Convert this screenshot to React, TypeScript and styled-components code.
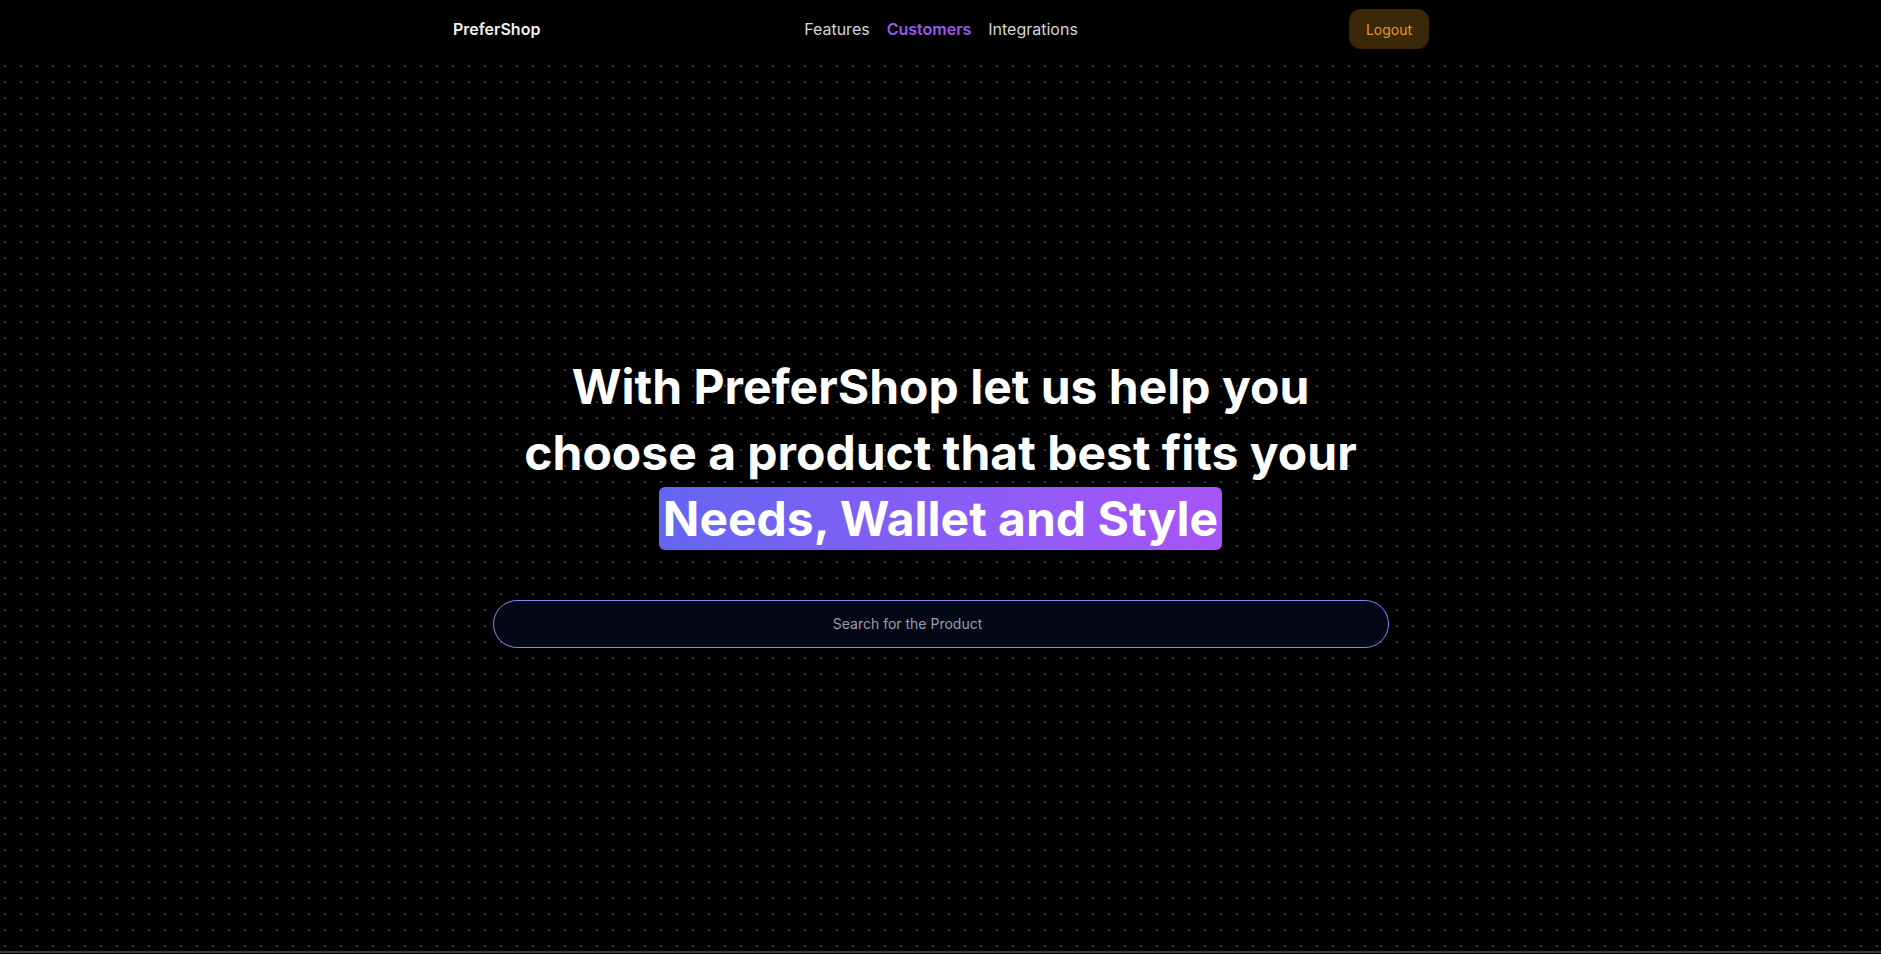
import React from 'react';
import styled, { createGlobalStyle } from 'styled-components';

const GlobalStyle = createGlobalStyle`
  html, body {
    margin: 0;
    padding: 0;
    background: #000;
    height: 100%;
  }
  body {
    font-family: Inter, "Noto Sans", "Liberation Sans", sans-serif;
    color: #fff;
    overflow: hidden;
  }
  #root {
    height: 100%;
  }
`;

const navItems = [
  { name: 'Features', active: false },
  { name: 'Customers', active: true },
  { name: 'Integrations', active: false },
];

const Page = styled.div`
  display: flex;
  flex-direction: column;
  height: 954px;
  background: #000;
`;

const Nav = styled.header`
  height: 58px;
  flex-shrink: 0;
  background: #000;
  display: flex;
  justify-content: center;
`;

const NavInner = styled.div`
  width: 977px;
  display: grid;
  grid-template-columns: 1fr auto 1fr;
  align-items: center;
`;

const Brand = styled.a`
  font-size: 16px;
  font-weight: 600;
  color: #f2f2f2;
  text-decoration: none;
  justify-self: start;
  padding-left: 1px;
`;

const Menu = styled.ul`
  list-style: none;
  margin: 0;
  padding: 0 0 0 1px;
  display: flex;
  gap: 17px;
`;

const MenuLink = styled.a<{ $active?: boolean }>`
  font-size: 16px;
  font-weight: ${(p) => (p.$active ? 600 : 400)};
  color: ${(p) => (p.$active ? '#9b59e6' : '#d6d6d6')};
  text-decoration: none;
  cursor: pointer;
`;

const LogoutButton = styled.button`
  justify-self: end;
  height: 40px;
  width: 80px;
  border: none;
  border-radius: 12px;
  background: #3a2808;
  color: #e39a1c;
  font-family: inherit;
  font-size: 14px;
  cursor: pointer;
`;

const Hero = styled.main`
  flex: 1;
  display: flex;
  flex-direction: column;
  align-items: center;
  justify-content: center;
  padding-bottom: 8px;
  background-color: #000;
  background-image: radial-gradient(circle, #3b3b3b 1px, transparent 1.2px);
  background-size: 16px 16px;
  background-position: -3px 0;
  border-bottom: 2px solid #3a3a3a;
  margin-bottom: 1px;
`;

const Title = styled.h1`
  margin: 0;
  width: 900px;
  text-align: center;
  font-size: 48px;
  line-height: 66px;
  font-weight: 700;
  letter-spacing: 0;
  color: #fff;
`;

const Highlight = styled.span`
  display: inline-block;
  line-height: 63px;
  padding: 0 4px;
  border-radius: 6px;
  background: linear-gradient(90deg, #6366f1 0%, #8b5cf6 55%, #a855f7 100%);
`;

const SearchInput = styled.input`
  box-sizing: border-box;
  margin-top: 48px;
  width: 896px;
  height: 48px;
  border-radius: 24px;
  border: 1px solid #8b84ec;
  background: #040816;
  color: #e5e7eb;
  font-family: inherit;
  font-size: 14px;
  text-align: center;
  padding: 0 82px 0 16px;
  outline: none;
  &::placeholder {
    color: #9a9cab;
  }
`;

export default function App() {
  return (
    <>
      <GlobalStyle />
      <Page>
        <Nav>
          <NavInner>
            <Brand href="#">PreferShop</Brand>
            <Menu>
              {navItems.map((item) => (
                <li key={item.name}>
                  <MenuLink $active={item.active}>{item.name}</MenuLink>
                </li>
              ))}
            </Menu>
            <LogoutButton>Logout</LogoutButton>
          </NavInner>
        </Nav>
        <Hero>
          <Title>
            With PreferShop let us help you
            <br />
            choose a product that best fits your
            <br />
            <Highlight>Needs, Wallet and Style</Highlight>
          </Title>
          <SearchInput placeholder="Search for the Product" />
        </Hero>
      </Page>
    </>
  );
}
